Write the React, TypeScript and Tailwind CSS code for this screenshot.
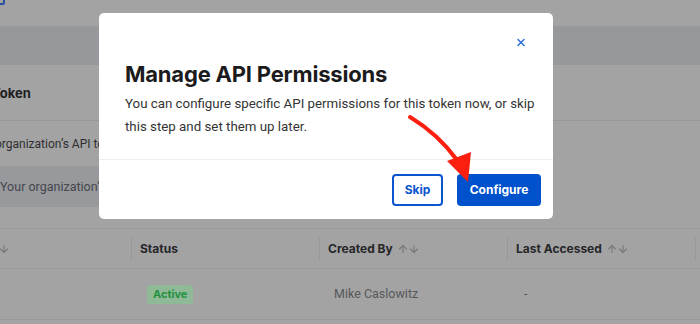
import React from "react";
import { ArrowUp, ArrowDown, X } from "lucide-react";

const font = { fontFamily: "Inter, 'Noto Sans', sans-serif" };
const body = { fontFamily: "Roboto, 'Noto Sans', sans-serif" };

function SortIcons() {
  return (
    <span className="ml-[4px] flex items-center text-[#78787a]">
      <ArrowUp size={12} strokeWidth={2.2} />
      <ArrowDown size={12} strokeWidth={2.2} className="-ml-[1px]" />
    </span>
  );
}

function HeaderCell({ label, sort }: { label: string; sort?: boolean }) {
  return (
    <div className="flex h-full w-[188px] shrink-0 items-center">
      <div className="h-[24px] w-px bg-[#98989a]" />
      <span className="ml-[8px] text-[12px] font-bold text-[#262628]">{label}</span>
      {sort && <SortIcons />}
    </div>
  );
}

export default function App() {
  return (
    <div
      className="relative h-[324px] w-[700px] overflow-hidden bg-[#a3a3a4]"
      style={font}
    >
      {/* underlying page */}
      <div className="flex flex-col">
        <div className="h-[26px]">
          <div className="-ml-[7px] -mt-[7px] h-[12px] w-[12px] rounded-[2px] border-2 border-[#2d4d9e]" />
        </div>
        <div className="h-[39px] bg-[#96989c]" />
        <div className="flex h-[56px] items-center border-b border-[#98989a]">
          <span className="-ml-[8px] pt-[2px] text-[13px] font-bold text-[#1e1e20]">Token</span>
        </div>
        <div className="flex h-[45px] items-center">
          <span className="-ml-[5px] whitespace-nowrap text-[12px] text-[#2e2e30]" style={body}>
            organization’s API tokens
          </span>
        </div>
        <div className="flex h-[41px] w-[420px] items-center bg-[#97999d]">
          <span className="pt-[2px] whitespace-nowrap text-[12.5px] text-[#45474c]" style={body}>
            Your organization’s API tokens
          </span>
        </div>
        <div className="h-[21px]" />
        <div className="flex h-[41px] border-y border-[#99999b]">
          <div className="flex h-full w-[131px] shrink-0 items-center text-[#78787a]">
            <ArrowDown size={12} strokeWidth={2.2} className="-ml-[2px]" />
          </div>
          <HeaderCell label="Status" />
          <HeaderCell label="Created By" sort />
          <HeaderCell label="Last Accessed" sort />
          <div className="flex h-full items-center">
            <div className="h-[24px] w-px bg-[#98989a]" />
          </div>
        </div>
        <div className="flex h-[51px] items-center border-b border-[#99999b]">
          <div className="w-[131px] shrink-0" />
          <div className="flex w-[188px] shrink-0 items-center pl-[16px]">
            <span className="rounded-[3px] bg-[#8fb997] px-[6px] py-[2px] text-[11px] font-bold leading-[15px] text-[#23913f]">
              Active
            </span>
          </div>
          <div className="w-[188px] shrink-0 pl-[15px] text-[12.5px] text-[#575759]" style={body}>
            Mike Caslowitz
          </div>
          <div className="w-[188px] shrink-0 pl-[17px] text-[12.5px] text-[#575759]" style={body}>-</div>
        </div>
      </div>

      {/* modal */}
      <div className="absolute left-[99px] top-[13px] flex h-[206px] w-[454px] flex-col overflow-hidden rounded-[5px] bg-white">
        <div className="flex h-[146px] flex-col px-[26px]">
          <div className="flex justify-end pt-[23px]">
            <button className="flex h-[12px] w-[12px] items-center justify-center text-[#2d6ee0]">
              <X size={13} strokeWidth={3} />
            </button>
          </div>
          <h2 className="mt-[12px] text-[22px] font-bold leading-[28px] tracking-[-0.2px] text-[#1b1b1d]">
            Manage API Permissions
          </h2>
          <p className="mt-[4px] whitespace-nowrap text-[13.3px] leading-[23px] text-[#343436]" style={body}>
            You can configure specific API permissions for this token now, or skip
            <br />
            this step and set them up later.
          </p>
        </div>
        <div className="flex h-[60px] items-center justify-end gap-[14px] border-t border-[#eeeeee] pr-[12px]">
          <button className="flex h-[32px] w-[51px] items-center justify-center rounded-[4px] border-2 border-[#0a55d0] text-[12px] font-bold text-[#0a55d0]">
            Skip
          </button>
          <button className="flex h-[32px] w-[84px] items-center justify-center rounded-[4px] bg-[#0052cc] text-[12px] font-bold text-white">
            Configure
          </button>
        </div>
      </div>

      {/* annotation arrow */}
      <svg
        className="pointer-events-none absolute left-0 top-0"
        width="700"
        height="324"
        viewBox="0 0 700 324"
      >
        <path
          d="M410 117 Q 438 134 457 160"
          stroke="#fb1f10"
          strokeWidth="4"
          fill="none"
          strokeLinecap="round"
        />
        <polygon points="447,161 471,152 468,182" fill="#fb1f10" />
      </svg>
    </div>
  );
}
